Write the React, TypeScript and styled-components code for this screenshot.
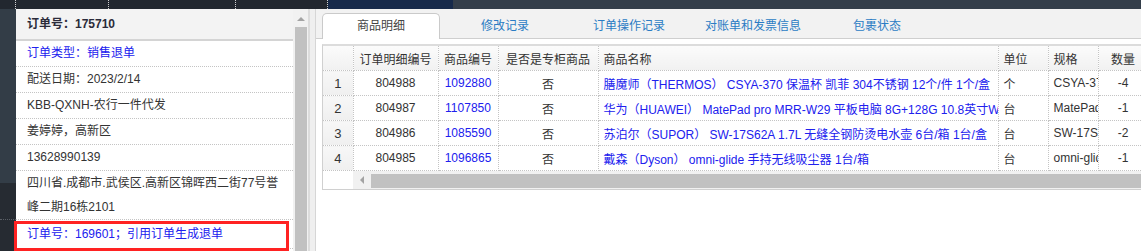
import React from "react";
import styled, { createGlobalStyle } from "styled-components";

const GlobalStyle = createGlobalStyle`
  html, body {
    margin: 0;
    padding: 0;
    overflow: hidden;
    background: #ffffff;
  }
  body {
    font-family: "Liberation Sans", Arial, "Noto Sans CJK SC", sans-serif;
    font-size: 12px;
    color: #333;
  }
`;

const BLUE = "#2020ee";

const Page = styled.div`
  width: 1141px;
  height: 251px;
  display: flex;
  flex-direction: column;
  overflow: hidden;
`;

const TopBar = styled.div`
  height: 9px;
  display: flex;
  background: #343e4a;
  flex-shrink: 0;
`;

const TopSeg = styled.div<{ $w: number; $bg?: string; $dotted?: boolean }>`
  width: ${(p) => p.$w}px;
  background: ${(p) => p.$bg || "#22272f"};
  border-right: ${(p) => (p.$dotted ? "1px dotted #d0d0d0" : "none")};
  box-sizing: border-box;
`;

const Main = styled.div`
  flex: 1;
  display: flex;
  min-height: 0;
`;

const SideStrip = styled.div`
  width: 16px;
  flex-shrink: 0;
  display: flex;
  flex-direction: column;
`;

const SideTop = styled.div`
  height: 174px;
  background: #333d47;
`;

const SideBottom = styled.div`
  flex: 1;
  background: #262b32;
  position: relative;
  &::after {
    content: "";
    position: absolute;
    left: 0;
    right: 0;
    top: 36px;
    border-top: 1px dotted #5a5f66;
  }
`;

const LeftPanel = styled.div`
  width: 277px;
  flex-shrink: 0;
  background: #fff;
  position: relative;
`;

const LeftHeader = styled.div`
  height: 30px;
  line-height: 30px;
  padding-left: 11px;
  background: #f3f3f3;
  border-bottom: 2px solid #d4d4d4;
  font-weight: bold;
  color: #2b2b3a;
`;

const InfoRow = styled.div<{ $blue?: boolean; $lh?: number; $boxed?: boolean }>`
  line-height: ${(p) => p.$lh || 25}px;
  padding-left: 11px;
  border-bottom: 1px dotted #c4c4c4;
  color: ${(p) => (p.$blue ? BLUE : "#333")};
  white-space: nowrap;
  position: relative;

  ${(p) =>
    p.$boxed &&
    `
    line-height: 28px;
    &::after {
      content: "";
      position: absolute;
      left: -2px;
      right: 4px;
      top: 1px;
      bottom: -3px;
      border: 3px solid #ff2222;
      z-index: 2;
    }
  `}
`;

const VScroll = styled.div`
  width: 15px;
  flex-shrink: 0;
  background: #f1f1f1;
  display: flex;
  flex-direction: column;
  align-items: center;
`;

const ArrowUp = styled.div`
  width: 0;
  height: 0;
  margin: 8px 0 6px;
  border-left: 4px solid transparent;
  border-right: 4px solid transparent;
  border-bottom: 4px solid #a3a3a3;
`;

const VThumb = styled.div`
  width: 12px;
  flex: 1;
  background: #c1c1c1;
`;

const Splitter = styled.div`
  width: 8px;
  flex-shrink: 0;
  background: #efefef;
  border-left: 2px solid #dcdcdc;
  border-right: 1px solid #d6d6d6;
  box-sizing: border-box;
`;

const RightPanel = styled.div`
  flex: 1;
  min-width: 0;
  background: #fff;
  overflow: hidden;
  display: flex;
  flex-direction: column;
`;

const TabStrip = styled.div`
  height: 29px;
  background: #f2f2f2;
  border-bottom: 1px solid #cfcfcf;
  display: flex;
  align-items: flex-end;
  gap: 6px;
  padding-left: 6px;
  flex-shrink: 0;
`;

const Tab = styled.div<{ $active?: boolean }>`
  width: 118px;
  height: 26px;
  line-height: 25px;
  text-align: center;
  box-sizing: border-box;
  margin-bottom: -1px;
  border: 1px solid ${(p) => (p.$active ? "#cacaca" : "transparent")};
  border-bottom: none;
  border-radius: 5px 5px 0 0;
  background: ${(p) => (p.$active ? "#fff" : "transparent")};
  color: ${(p) => (p.$active ? "#444" : "#2b7cc4")};
  flex-shrink: 0;
`;

const GridWrap = styled.div`
  margin: 5px 0 0 6px;
  width: 850px;
  border: 1px solid #d0d0d0;
  border-top: 2px solid #dcdcdc;
  flex-shrink: 0;
`;

const Table = styled.table`
  border-collapse: collapse;
  table-layout: fixed;
  width: 825px;
  font-family: "Liberation Sans", Arial, "Noto Sans CJK SC", sans-serif;
  font-size: 12px;
  color: #333;
`;

const Th = styled.th<{ $align?: string }>`
  height: 24px;
  padding: 0 5px;
  font-weight: normal;
  color: #333;
  text-align: ${(p) => p.$align || "center"};
  background: linear-gradient(#fbfbfb, #f1f1f1);
  border-right: 1px dotted #c4c4c4;
  border-bottom: 1px dotted #c4c4c4;
  white-space: nowrap;
  overflow: hidden;
`;

const Td = styled.td<{ $align?: string; $blue?: boolean; $rn?: boolean }>`
  height: 24px;
  padding: 0 ${(p) => (p.$align === "left" ? 5 : 2)}px;
  text-align: ${(p) => p.$align || "center"};
  color: ${(p) => (p.$blue ? BLUE : "#333")};
  background: ${(p) => (p.$rn ? "linear-gradient(#f7f7f7, #efefef)" : "#fff")};
  border-right: 1px dotted #c4c4c4;
  border-bottom: 1px dotted #c4c4c4;
  white-space: nowrap;
  overflow: hidden;
  text-overflow: clip;
  font-size: ${(p) => (p.$rn ? 13 : 12)}px;
`;

const HScroll = styled.div`
  height: 18px;
  display: flex;
`;

const HScrollPad = styled.div`
  width: 30px;
  background: #fff;
`;

const HTrack = styled.div`
  flex: 1;
  display: flex;
  background: #f1f1f1;
`;

const HButton = styled.div`
  width: 18px;
  display: flex;
  align-items: center;
  justify-content: center;
  &::before {
    content: "";
    border-top: 4px solid transparent;
    border-bottom: 4px solid transparent;
    border-right: 4px solid #a3a3a3;
  }
`;

const HThumb = styled.div`
  flex: 1;
  margin: 3px 0 1px;
  background: #c1c1c1;
`;

type Row = {
  id: string;
  code: string;
  name: string;
  unit: string;
  spec: string;
  qty: string;
};

const rows: Row[] = [
  {
    id: "804988",
    code: "1092880",
    name: "膳魔师（THERMOS） CSYA-370 保温杯 凯菲 304不锈钢 12个/件 1个/盒",
    unit: "个",
    spec: "CSYA-370",
    qty: "-4",
  },
  {
    id: "804987",
    code: "1107850",
    name: "华为（HUAWEI） MatePad pro MRR-W29 平板电脑 8G+128G 10.8英寸WiFi",
    unit: "台",
    spec: "MatePad pro",
    qty: "-1",
  },
  {
    id: "804986",
    code: "1085590",
    name: "苏泊尔（SUPOR） SW-17S62A 1.7L 无缝全钢防烫电水壶 6台/箱 1台/盒",
    unit: "台",
    spec: "SW-17S62A",
    qty: "-2",
  },
  {
    id: "804985",
    code: "1096865",
    name: "戴森（Dyson） omni-glide 手持无线吸尘器 1台/箱",
    unit: "台",
    spec: "omni-glide",
    qty: "-1",
  },
];

const tabs = ["商品明细", "修改记录", "订单操作记录", "对账单和发票信息", "包裹状态"];

export default function App() {
  return (
    <Page>
      <GlobalStyle />
      <TopBar>
        <TopSeg $w={16} $dotted />
        <TopSeg $w={93} $dotted />
        <TopSeg $w={127} $dotted />
        <TopSeg $w={92} $dotted />
        <TopSeg $w={125} $bg="#172a4b" />
      </TopBar>
      <Main>
        <SideStrip>
          <SideTop />
          <SideBottom />
        </SideStrip>
        <LeftPanel>
          <LeftHeader>订单号：175710</LeftHeader>
          <InfoRow $blue>订单类型：销售退单</InfoRow>
          <InfoRow>配送日期：2023/2/14</InfoRow>
          <InfoRow>KBB-QXNH-农行一件代发</InfoRow>
          <InfoRow>姜婷婷，高新区</InfoRow>
          <InfoRow>13628990139</InfoRow>
          <InfoRow $lh={24}>
            四川省.成都市.武侯区.高新区锦晖西二街77号誉
            <br />
            峰二期16栋2101
          </InfoRow>
          <InfoRow $blue $boxed>
            订单号：169601；引用订单生成退单
          </InfoRow>
        </LeftPanel>
        <VScroll>
          <ArrowUp />
          <VThumb />
        </VScroll>
        <Splitter />
        <RightPanel>
          <TabStrip>
            {tabs.map((t, i) => (
              <Tab key={t} $active={i === 0}>
                {t}
              </Tab>
            ))}
          </TabStrip>
          <GridWrap>
            <Table>
              <colgroup>
                <col style={{ width: 30 }} />
                <col style={{ width: 85 }} />
                <col style={{ width: 60 }} />
                <col style={{ width: 100 }} />
                <col style={{ width: 400 }} />
                <col style={{ width: 50 }} />
                <col style={{ width: 50 }} />
                <col style={{ width: 50 }} />
              </colgroup>
              <thead>
                <tr>
                  <Th />
                  <Th>订单明细编号</Th>
                  <Th>商品编号</Th>
                  <Th>是否是专柜商品</Th>
                  <Th $align="left">商品名称</Th>
                  <Th $align="left">单位</Th>
                  <Th $align="left">规格</Th>
                  <Th>数量</Th>
                </tr>
              </thead>
              <tbody>
                {rows.map((r, i) => (
                  <tr key={r.id}>
                    <Td $rn>{i + 1}</Td>
                    <Td>{r.id}</Td>
                    <Td $blue>{r.code}</Td>
                    <Td>否</Td>
                    <Td $align="left" $blue>
                      {r.name}
                    </Td>
                    <Td $align="left">{r.unit}</Td>
                    <Td $align="left">{r.spec}</Td>
                    <Td>{r.qty}</Td>
                  </tr>
                ))}
              </tbody>
            </Table>
            <HScroll>
              <HScrollPad />
              <HTrack>
                <HButton />
                <HThumb />
              </HTrack>
            </HScroll>
          </GridWrap>
        </RightPanel>
      </Main>
    </Page>
  );
}
